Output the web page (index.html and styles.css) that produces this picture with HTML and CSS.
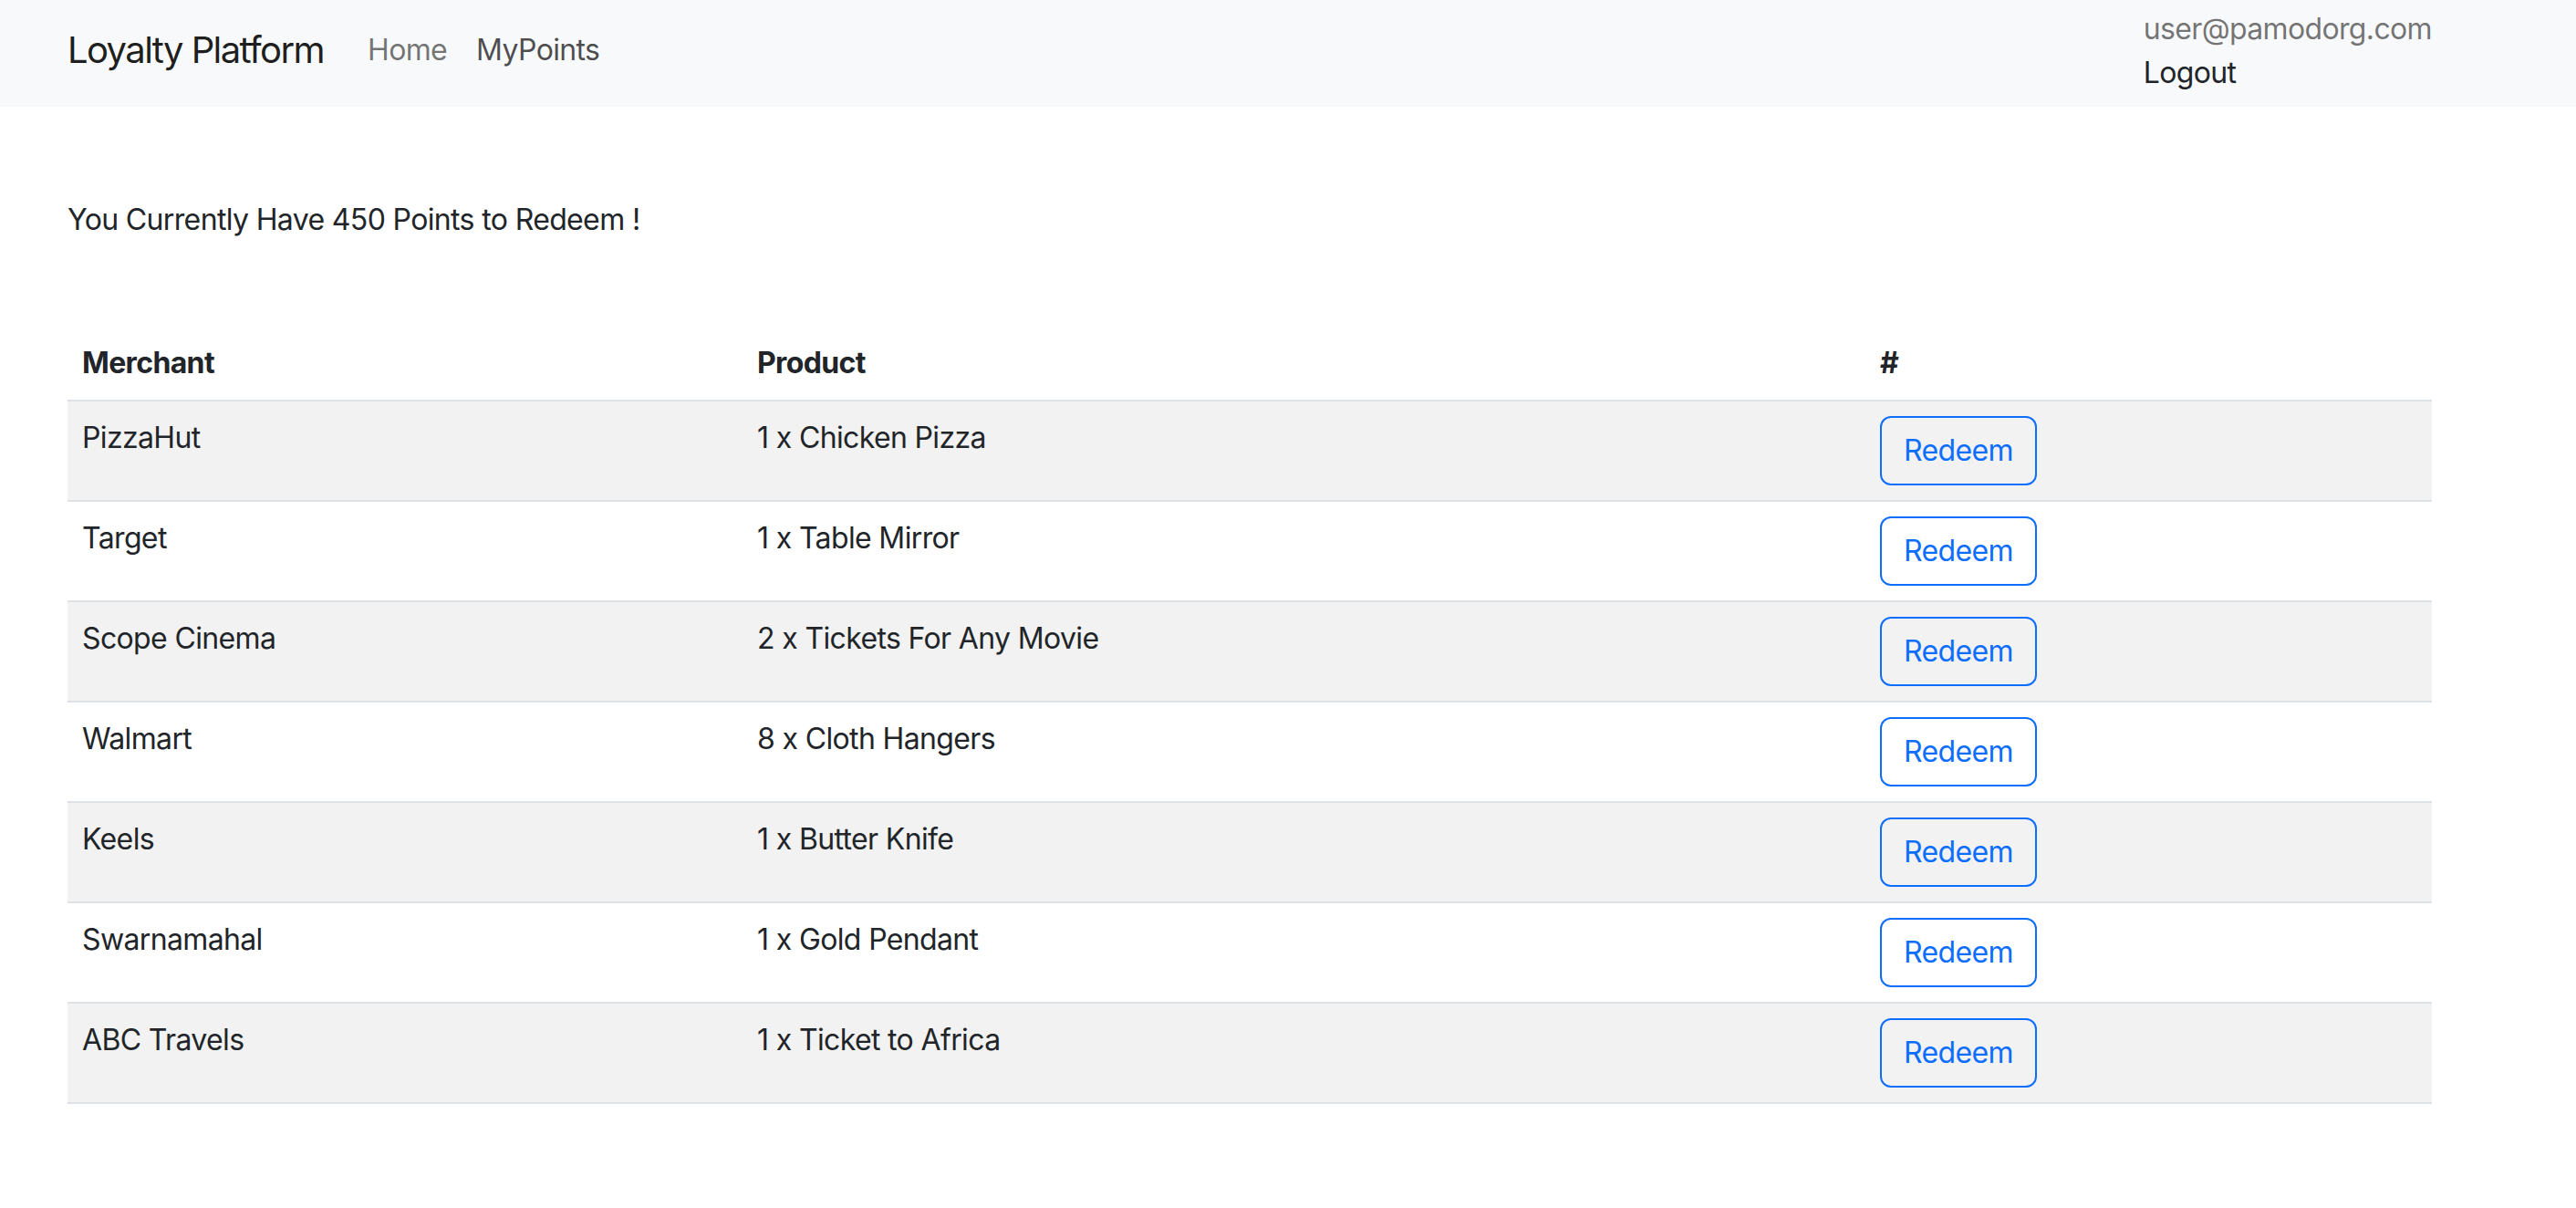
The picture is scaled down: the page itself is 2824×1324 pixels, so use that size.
FILE: index.html
```html
<!DOCTYPE html>
<html lang="en">
<head>
<meta charset="utf-8">
<title>Loyalty Platform</title>
<link rel="stylesheet" href="styles.css">
</head>
<body>
<nav class="navbar">
  <div class="nav-left">
    <a class="brand" href="#">Loyalty Platform</a>
    <a class="nav-link" href="#">Home</a>
    <a class="nav-link active" href="#">MyPoints</a>
  </div>
  <div class="nav-right">
    <span class="user-email">user@pamodorg.com</span>
    <a class="logout" href="#">Logout</a>
  </div>
</nav>
<main class="content">
  <p class="points">You Currently Have 450 Points to Redeem !</p>
  <table class="rewards">
    <colgroup>
      <col class="c-merchant">
      <col class="c-product">
      <col class="c-action">
    </colgroup>
    <thead>
      <tr><th>Merchant</th><th>Product</th><th>#</th></tr>
    </thead>
    <tbody>
      <tr><td>PizzaHut</td><td>1 x Chicken Pizza</td><td><button class="btn">Redeem</button></td></tr>
      <tr><td>Target</td><td>1 x Table Mirror</td><td><button class="btn">Redeem</button></td></tr>
      <tr><td>Scope Cinema</td><td>2 x Tickets For Any Movie</td><td><button class="btn">Redeem</button></td></tr>
      <tr><td>Walmart</td><td>8 x Cloth Hangers</td><td><button class="btn">Redeem</button></td></tr>
      <tr><td>Keels</td><td>1 x Butter Knife</td><td><button class="btn">Redeem</button></td></tr>
      <tr><td>Swarnamahal</td><td>1 x Gold Pendant</td><td><button class="btn">Redeem</button></td></tr>
      <tr><td>ABC Travels</td><td>1 x Ticket to Africa</td><td><button class="btn">Redeem</button></td></tr>
    </tbody>
  </table>
</main>
</body>
</html>
```
FILE: styles.css
```css
* { box-sizing: border-box; }
html, body { margin: 0; padding: 0; }
body {
  font-family: Inter, "Liberation Sans", sans-serif;
  font-size: 32px;
  line-height: 48px;
  letter-spacing: -0.02em;
  color: #212529;
  background: #fff;
}
a { text-decoration: none; }

.navbar {
  height: 117px;
  background: #f8f9fa;
  display: flex;
  justify-content: space-between;
  padding: 0 158px 0 74px;
}
.nav-left {
  display: flex;
  align-items: center;
  padding-bottom: 8px;
}
.brand {
  font-size: 40px;
  line-height: 60px;
  letter-spacing: -0.04em;
  padding: 10px 0;
  margin-right: 32px;
  color: rgba(0,0,0,.9);
}
.nav-link {
  padding: 16px;
  color: rgba(0,0,0,.55);
}
.nav-link.active { color: rgba(0,0,0,.7); }
.nav-right {
  display: flex;
  flex-direction: column;
  padding-top: 8px;
}
.user-email { color: rgba(0,0,0,.55); }
.logout { color: #212529; }

.content {
  padding: 0 158px 0 74px;
}
.points {
  margin: 100px 0 93px;
}
.rewards {
  width: 2592px;
  border-collapse: collapse;
  table-layout: fixed;
}
.c-merchant { width: 740px; }
.c-product { width: 1231px; }
.c-action { width: 621px; }
.rewards th, .rewards td {
  text-align: left;
  vertical-align: top;
  padding: 16px;
  border-bottom: 2px solid #dee2e6;
}
.rewards th { font-weight: 700; }
.rewards tbody tr:nth-child(odd) td { background: #f2f2f2; }
.btn {
  font-family: inherit;
  font-size: 32px;
  line-height: 48px;
  letter-spacing: -0.02em;
  color: #0d6efd;
  background: transparent;
  border: 2px solid #0d6efd;
  border-radius: 12px;
  padding: 12px 24px;
  margin: 0;
  display: inline-block;
}
```
